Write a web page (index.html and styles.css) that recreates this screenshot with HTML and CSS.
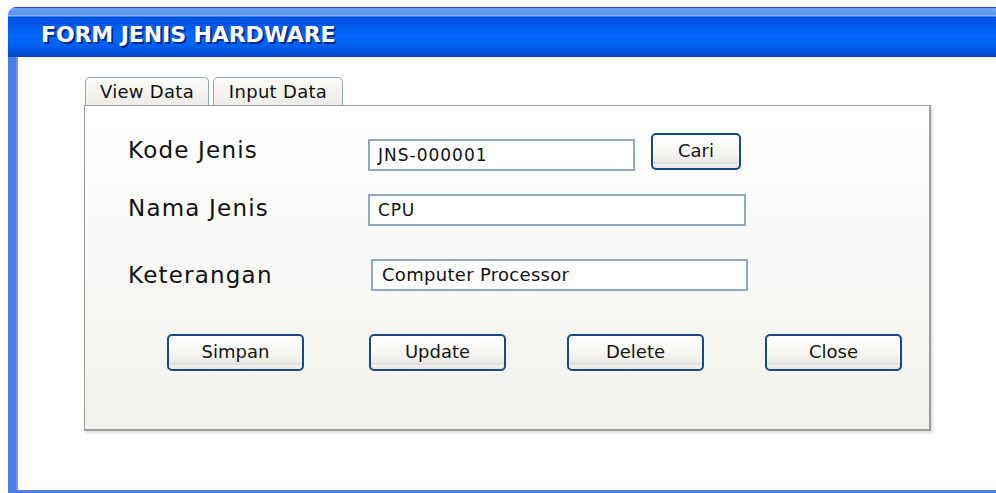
FILE: index.html
```html
<!DOCTYPE html>
<html lang="id">
<head>
<meta charset="utf-8">
<title>Form Jenis Hardware</title>
<link rel="stylesheet" href="styles.css">
</head>
<body>
<div class="window">
  <div class="titlebar"><span class="title">FORM JENIS HARDWARE</span></div>
  <div class="client">
    <div class="tabs">
      <div class="tab tab-view">View Data</div>
      <div class="tab tab-input">Input Data</div>
    </div>
    <div class="panel">
      <div class="row row-kode">
        <div class="label">Kode Jenis</div>
        <div class="field field-kode">JNS-000001</div>
        <div class="btn btn-cari">Cari</div>
      </div>
      <div class="row row-nama">
        <div class="label">Nama Jenis</div>
        <div class="field field-nama">CPU</div>
      </div>
      <div class="row row-ket">
        <div class="label">Keterangan</div>
        <div class="field field-ket">Computer Processor</div>
      </div>
      <div class="actions">
        <div class="btn btn-action">Simpan</div>
        <div class="btn btn-action btn-update">Update</div>
        <div class="btn btn-action">Delete</div>
        <div class="btn btn-action">Close</div>
      </div>
    </div>
  </div>
</div>
</body>
</html>
```
FILE: styles.css
```css
* { box-sizing: border-box; }

html, body {
  margin: 0;
  background: #ffffff;
}

body {
  padding: 7px 0 0 8px;
  overflow: hidden;
  font-family: "DejaVu Sans", Verdana, sans-serif;
  color: #111111;
}

/* window frame */
.window {
  width: 988px;
  height: 486px;
  display: flex;
  flex-direction: column;
  border-bottom: 3px solid #4f7de6;
}

.titlebar {
  height: 50px;
  flex: none;
  border-top-left-radius: 8px;
  background: linear-gradient(to bottom,
    #1c50c4 0, #1c50c4 1px,
    #6ea3f7 1px, #5a91ef 8px,
    #86b6ff 8px, #86b6ff 9px,
    #0052e2 10px, #005aea 20px,
    #0068fc 28px, #0062f2 38px,
    #0052dc 45px, #0042c4 50px);
  display: flex;
  align-items: center;
  padding: 5px 0 0 33px;
}

.title {
  font-weight: bold;
  font-size: 22px;
  color: #ffffff;
  text-shadow: 2px 2px 0 #0b2a86;
  letter-spacing: -0.1px;
}

.client {
  flex: 1;
  border-left: 8px solid #4c7ce8;
  box-shadow: inset 2px 0 0 #6e98f0;
  padding: 20px 0 0 68px;
  background: #ffffff;
}

/* tabs */
.tabs {
  display: flex;
  gap: 4px;
  margin-left: 1px;
  height: 28px;
}

.tab {
  height: 28px;
  border: 1px solid #98a7b4;
  border-bottom: none;
  border-radius: 5px 5px 0 0;
  background: linear-gradient(to bottom, #fbfbf9, #ecebe6);
  font-size: 18px;
  letter-spacing: 0.3px;
  line-height: 27px;
  text-align: center;
  color: #111111;
}

.tab-view { width: 124px; }
.tab-input { width: 130px; }

/* panel */
.panel {
  width: 847px;
  height: 326px;
  border: 1px solid #9b9d9d;
  border-right-width: 2px;
  border-bottom-width: 2px;
  box-shadow: 2px 2px 2px rgba(0, 0, 0, 0.12);
  background: linear-gradient(to bottom, #ffffff 0, #fcfcfb 25%, #f7f6f3 60%, #f2f1ed 100%);
  padding: 27px 0 0 43px;
}

.row {
  display: flex;
  align-items: flex-start;
}

.label {
  width: 240px;
  flex: none;
  font-size: 23px;
  letter-spacing: 1.2px;
  line-height: 32px;
  color: #111111;
}

.row-kode .label { margin-top: 1px; }
.row-nama { margin-top: 23px; }
.row-nama .label { margin-top: -2px; }
.row-ket { margin-top: 33px; }

.field {
  height: 32px;
  border: 2px solid #8ea8c6;
  background: #ffffff;
  padding-left: 8px;
  line-height: 28px;
  font-size: 17px;
  color: #111111;
}

.field-kode {
  width: 267px;
  margin-top: 6px;
  font-size: 17px;
  letter-spacing: 1px;
}

.field-nama {
  width: 378px;
  letter-spacing: 0.8px;
}

.field-ket {
  width: 377px;
  margin-left: 3px;
  padding-left: 9px;
  font-size: 18px;
  letter-spacing: 0.3px;
}

/* buttons */
.btn {
  height: 37px;
  border: 2px solid #174a84;
  border-radius: 5px;
  background: linear-gradient(to bottom, #ffffff 0, #f7f6f3 50%, #ecebe6 80%, #dcdbd5 84%, #f1f0ec 90%, #e9e8e3 100%);
  font-size: 18px;
  line-height: 32px;
  text-align: center;
  color: #151515;
}

.btn-cari {
  width: 90px;
  margin-left: 16px;
}

.actions {
  display: flex;
  gap: 61px;
  margin-top: 43px;
  padding-left: 39px;
}

.btn-action { width: 137px; }
.btn-update { margin-left: 4px; }
```
